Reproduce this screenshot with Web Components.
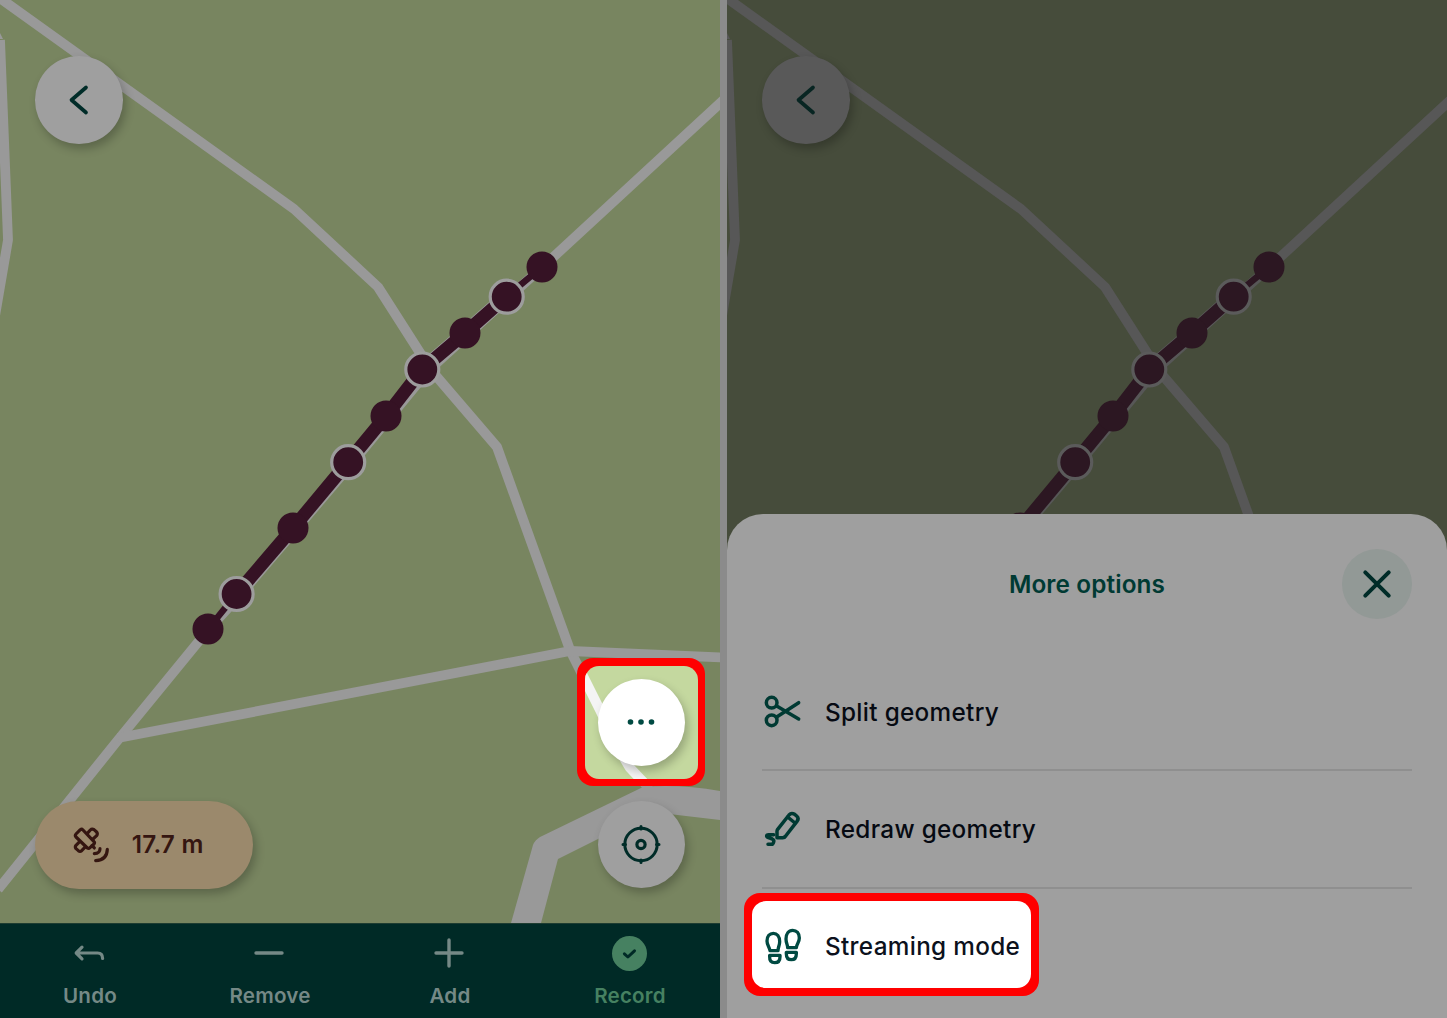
<!DOCTYPE html>
<html lang="en"><head><meta charset="utf-8"><title>Map editing</title>
<style>
html,body{margin:0;height:100%;overflow:hidden;background:#8b8b8b;font-family:Inter,sans-serif;font-optical-sizing:none}
</style></head><body>
<app-screens></app-screens>
<script>
const define = (name, html, hook) => customElements.define(name, class extends HTMLElement {
  constructor() {
    super();
    const t = document.createElement('template');
    t.innerHTML = html;
    this.attachShadow({mode: 'open'}).appendChild(t.content.cloneNode(true));
  }
  connectedCallback() { if (hook) hook(this, this.shadowRoot); }
});

const icons = {
  back: [20, 30, '<path d="M18 2.5 3.500 15 18 27.500" stroke-width="3.7"/>', '0 0 20 30'],
  more: [28, 7, '<g fill="currentColor" stroke="none"><circle cx="3.5" cy="3" r="2.800"/><circle cx="14" cy="3" r="2.800"/><circle cx="24.5" cy="3" r="2.800"/></g>', '0 0 28 7'],
  locate: [40, 40, '<circle cx="20" cy="20.500" r="16.2" stroke-width="3"/><circle cx="20" cy="20.500" r="4.1" stroke-width="3.200"/><path stroke-width="3" d="M20 2.500v2.500M20 36v2.500M2 20.500h2.500M35.500 20.500h2.500"/>', '0 0 40 40'],
  satellite: [36.67, 36.67, '<g stroke-width="9.500"><path d="M9 22 22 9q4-3 8 1l33 35q3 3 0 7L51 63q-4 4-8 1L9 31q-4-5 0-9Z"/><path d="M43 20 52 10q5-5 11-1l8 7q4 6 0 11L60 37"/><path d="M20 45 9 56q-4 5 0 10l7 6q5 4 10 0L37 61"/><path d="m57 57 7 7"/><path d="M81 66q0 14-17 15" /><path d="M103 68q-1 32-35 34"/></g>', '0 -2 110 110'],
  undo: [31, 16, '<path stroke-width="3.200" d="M8 2.200 2.200 8 8 13.800M2.600 8h21q5 0 5 5.500"/>', '0 0 31 16'],
  remove: [30, 30, '<path stroke-width="3.400" d="M2 15h26"/>', '0 0 30 30'],
  add: [30, 30, '<path stroke-width="3.400" d="M2 15h26M15 2v26"/>', '0 0 30 30'],
  record: [35, 35, '<circle cx="17.5" cy="17.5" r="17.5" fill="currentColor" stroke="none"/><path stroke="#002a26" stroke-width="3" d="m12.4 17.8 3.5 3.2 6.600-6.200"/>', '0 0 35 35'],
  split: [38, 34, '<g stroke-width="10.500"><circle cx="23" cy="26" r="16"/><circle cx="23" cy="79" r="16"/><path d="m38 36 66 39M38 69l66-43"/></g>', '0 0 114 102'],
  redraw: [38, 38, '<g stroke-width="10.500"><path d="M39 83V64q0-3 2-6L75 15q7-8 17-2l6 5q8 7 1 16L65 78q-3 5-9 5Z"/><path d="m71 21 22 18"/><path d="M29 74H14q-7 0-6 5 1 3 6 4l11 4q6 3 4 9-2 7-6 7H12"/></g>', '0 0 114 114'],
  feet: [38, 38, '<g stroke-width="10"><path d="M18 70C17 60 9 54 9 41 9 27 17 18 28 18S47 28 47 43C47 55 42 59 42 70Z"/><path d="M17 84h31v4q0 18-16 18T17 88Z"/><path d="M71 61C71 51 66 48 66 35 66 20 74 9 86 9s20 9 20 23C106 45 98 49 97 61Z"/><path d="M67 75h30v4q0 18-15 18T67 79Z"/></g>', '0 -1 114 114'],
  close: [28, 28, '<path stroke-width="4" d="m2.3 2.3 23.4 23.4M25.7 2.3 2.3 25.7"/>', '0 0 28 28']
};
define('ui-icon', '<style>:host{display:flex;flex:none}svg{display:block;overflow:visible;fill:none;stroke:currentColor;stroke-linecap:round;stroke-linejoin:round}</style><span></span>', (el, root) => {
  const [w, h, body, vb] = icons[el.getAttribute('name')];
  root.querySelector('span').innerHTML = `<svg width="${w}" height="${h}" viewBox="${vb}">${body}</svg>`;
});

define('track-map', `<style>
:host{display:block;overflow:hidden;background:var(--land)}svg{display:block}
.road{fill:none;stroke:var(--road);stroke-width:9.8;stroke-linejoin:round}
.track{fill:none;stroke:var(--track);stroke-width:13}
circle{fill:var(--track)}.v{stroke:var(--ring);stroke-width:3.200}
</style>
<svg width="720" height="923" viewBox="0 0 720 923">
<g class="road">
<path d="M-10-9 294 209 378 287 431 370 497 447 570 650 600 710Q622 756 630 768L650 789"/>
<path d="M0 40 8 240-5 316"/>
<path d="M730 94 548 262 508 298 427.500 371.500 351 464.500 240 595 208 630 118 740-2 889.500"/>
<path d="M118 738 570 651 722 657.5"/>
</g>
<path d="M0 33 3 39H0Z" fill="var(--road)"/>
<path d="M511 923 533 845Q535 840 540 837L643 787Q680 784 720 791V820L652 812 558 859 541 923Z" fill="var(--road)"/>
<path class="track" d="M507 296 465 333 422 369.500" style="stroke:var(--ring);stroke-width:14.500"/>
<path class="track" d="M507 296 465 333 422 369.500 386 416 348 462 293 528 236.500 594"/>
<path class="track" style="stroke-width:6.500" d="M542 267 507 296M236.500 594 208 629"/>
<g><circle cx="542" cy="267" r="15.500"/><circle cx="465" cy="333" r="15.500"/><circle cx="386" cy="416" r="15.500"/><circle cx="293" cy="528" r="15.500"/><circle cx="208" cy="629" r="15.500"/></g>
<g class="v"><circle cx="506.700" cy="296.700" r="16.500"/><circle cx="422.300" cy="369.500" r="16.500"/><circle cx="348.200" cy="462.200" r="16.500"/><circle cx="236.600" cy="594" r="16.500"/></g>
</svg>`);

define('round-button', `<style>
:host{display:flex;align-items:center;justify-content:center;width:87.500px;height:87.500px;border-radius:50%;background:var(--surface);color:var(--ink);box-shadow:3px 5px 10px rgba(0,0,0,.24);box-sizing:border-box;flex:none;position:relative}
::slotted(ui-icon){margin-right:1px}
</style><slot></slot>`);

define('accuracy-pill', `<style>
:host{display:flex;align-items:center;width:217.500px;height:88px;border-radius:44px;background:#9b896c;color:#351611;box-shadow:3px 5px 10px rgba(0,0,0,.24);box-sizing:border-box;padding:0 0 2px 38px;gap:22px;font-size:24.300px;letter-spacing:.25px;font-weight:600}
</style><ui-icon name="satellite"></ui-icon><slot></slot>`);

/* Spotlight: a red frame around a region shown at full brightness */
define('spot-light', `<style>
:host{display:flex;box-sizing:border-box;padding:8px 7px 7px 8px;border-radius:16px;background:#f00;flex:none}
:host([plain]){padding:8px}
.in{display:flex;flex:1;align-items:center;justify-content:var(--justify,center);position:relative;overflow:hidden;border-radius:14px;background:var(--spot,#fff)}
svg{position:absolute;inset:0}
:host([plain]) svg{display:none}
</style><div class="in"><svg width="113" height="113" viewBox="585 666 113 113"><path fill="none" stroke="#f4f4f4" stroke-width="9.800" d="M570 650 600 710Q622 756 630 768L650 789"/></svg><slot></slot></div>`);

define('action-item', `<style>
:host{display:flex;flex-direction:column;align-items:center;flex:1;color:#758986;font-size:20.600px;letter-spacing:.2px;font-weight:600;line-height:26px}
.i{height:60px;display:flex;align-items:center;margin-left:-1.500px}
</style><div class="i"></div><slot></slot>`, (el, root) => {
  const i = document.createElement('ui-icon');
  i.setAttribute('name', el.getAttribute('icon'));
  root.querySelector('.i').replaceChildren(i);
});

define('edit-screen', `<style>
:host{display:grid;grid-template-rows:923px 95px;width:720px;--land:#788560;--road:#999;--track:#351224;--ring:#9d9d9d;--surface:#9f9f9f;--ink:#002c28}
track-map,.controls{grid-area:1/1}
.controls{display:flex;flex-direction:column;justify-content:space-between;padding:56px 15px 34px 35px;z-index:1}
.bottom{display:flex;justify-content:space-between;align-items:flex-end}
.stack{display:flex;flex-direction:column;align-items:center;gap:14.500px;margin-bottom:1px}
.stack>round-button{margin-left:1px}
spot-light{width:128px;height:128px;--spot:#c4d89f;--surface:#fff;--ink:#004a42}
nav{display:flex;background:#002a26;box-shadow:inset 0 1px #1e3c31;z-index:2}
</style>
<track-map></track-map>
<div class="controls">
 <round-button><ui-icon name="back"></ui-icon></round-button>
 <div class="bottom"><accuracy-pill>17.7 m</accuracy-pill>
 <div class="stack"><spot-light><round-button><ui-icon name="more"></ui-icon></round-button></spot-light><round-button><ui-icon name="locate"></ui-icon></round-button></div></div>
</div>
<nav><action-item icon="undo">Undo</action-item><action-item icon="remove">Remove</action-item><action-item icon="add">Add</action-item><action-item icon="record" style="color:#468161">Record</action-item></nav>`);

define('option-row', `<style>
:host{display:flex;align-items:center;height:115.500px;border-bottom:2px solid #8f8f8f;padding-left:2px;gap:23px;color:#060a12;font-size:24.300px;letter-spacing:.32px;font-weight:500}
:host([last]){border-color:transparent}
.icon{display:flex;width:38px;color:var(--icon,#003a33)}
.label{padding-top:1px}
</style><span class="icon"><slot name="icon"></slot></span><span class="label"><slot></slot></span>`);

define('options-sheet', `<style>
:host{display:block;box-sizing:border-box;height:504px;background:#9f9f9f;border-radius:36px 36px 0 0;padding:35px 35px 0}
header{display:grid;grid-template-columns:70px 1fr 70px;align-items:center;height:70px;margin-bottom:34.500px;color:#003a33;text-align:center;font-size:24.300px;letter-spacing:.12px;font-weight:600}
.close{display:flex;align-items:center;justify-content:center;width:70px;height:70px;border-radius:50%;background:#929996;color:#002c28}
spot-light{width:294.500px;height:103px;margin:4px 0 0 -18px;--justify:flex-start}
spot-light option-row{padding-left:12px;--icon:#004a42;color:#0c111c;margin-top:5px}
</style>
<header><i></i><span>More options</span><span class="close"><ui-icon name="close"></ui-icon></span></header>
<option-row><ui-icon slot="icon" name="split"></ui-icon>Split geometry</option-row>
<option-row><ui-icon slot="icon" name="redraw"></ui-icon>Redraw geometry</option-row>
<spot-light plain><option-row last><ui-icon slot="icon" name="feet"></ui-icon>Streaming mode</option-row></spot-light>`);

define('options-screen', `<style>
:host{display:grid;grid-template-rows:514px 504px;width:720px;overflow:hidden;--land:#464c3b;--road:#575757;--track:#2c1722;--ring:#5b5b5b;--surface:#595959;--ink:#082522}
track-map{grid-area:1/1/3/2;height:1018px}
.controls{grid-area:1/1;padding:56px 35px;z-index:1}
options-sheet{grid-area:2/1;z-index:2}
</style><track-map></track-map><div class="controls"><round-button><ui-icon name="back"></ui-icon></round-button></div><options-sheet></options-sheet>`);

define('app-screens', `<style>:host{display:flex;gap:7px;width:1447px;height:1018px;background:#8b8b8b;overflow:hidden}</style><edit-screen></edit-screen><options-screen></options-screen>`);
</script>
</body></html>
